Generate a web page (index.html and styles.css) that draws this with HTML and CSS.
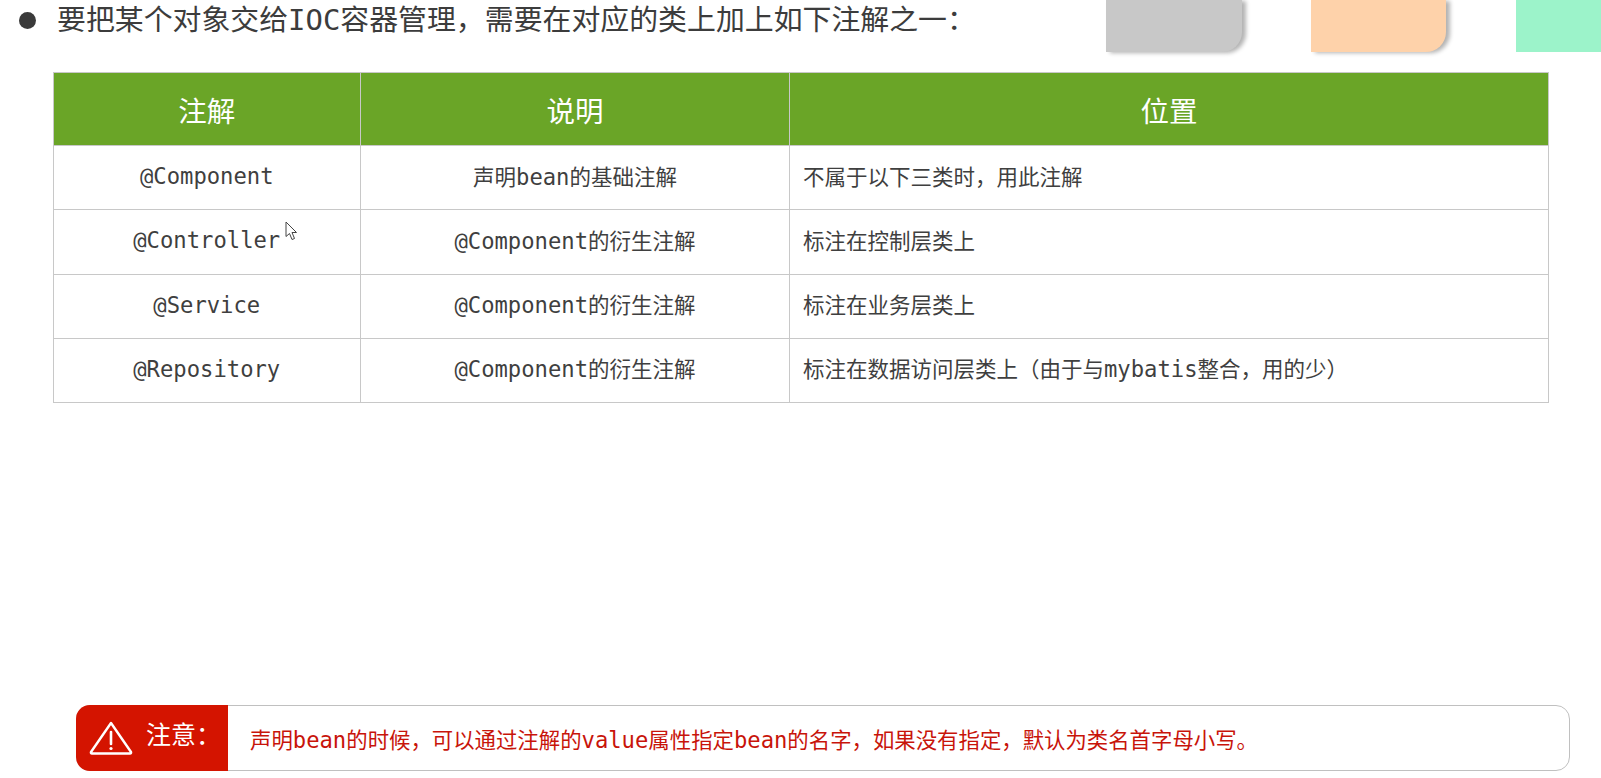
FILE: index.html
```html
<!DOCTYPE html>
<html lang="zh-CN">
<head>
<meta charset="utf-8">
<title>IOC 注解</title>
<link rel="stylesheet" href="styles.css">
</head>
<body>
<div class="page">
  <header class="top">
    <div class="heading">
      <span class="bullet"></span>
      <h1 class="heading-text">要把某个对象交给IOC容器管理，需要在对应的类上加上如下注解之一：</h1>
    </div>
    <div class="tabs">
      <span class="tab tab-gray"></span>
      <span class="tab tab-peach"></span>
      <span class="tab tab-mint"></span>
    </div>
  </header>
  <table class="grid">
    <colgroup><col class="c1"><col class="c2"><col class="c3"></colgroup>
    <thead>
      <tr><th>注解</th><th>说明</th><th>位置</th></tr>
    </thead>
    <tbody>
      <tr><td class="mid code"><span class="en">@Component</span></td><td class="mid">声明<span class="en">bean</span>的基础注解</td><td>不属于以下三类时，用此注解</td></tr>
      <tr><td class="mid code"><span class="en">@Controller</span></td><td class="mid"><span class="en">@Component</span>的衍生注解</td><td>标注在控制层类上</td></tr>
      <tr><td class="mid code"><span class="en">@Service</span></td><td class="mid"><span class="en">@Component</span>的衍生注解</td><td>标注在业务层类上</td></tr>
      <tr><td class="mid code"><span class="en">@Repository</span></td><td class="mid"><span class="en">@Component</span>的衍生注解</td><td>标注在数据访问层类上（由于与<span class="en">mybatis</span>整合，用的少）</td></tr>
    </tbody>
  </table>
  <div class="notice">
    <div class="notice-tag">
      <svg class="warn" viewBox="0 0 44 34" width="44" height="34" aria-hidden="true">
        <path d="M22 2 L42 31 Q42.500 32.500 41 32.500 L3 32.500 Q1.500 32.500 2 31 Z" fill="none" stroke="#fff" stroke-width="2.400" stroke-linejoin="round"/>
        <path d="M22 11 V23" stroke="#fff" stroke-width="2.600" stroke-linecap="round"/>
        <circle cx="22" cy="27.500" r="1.600" fill="#fff"/>
      </svg>
      <span class="notice-label">注意：</span>
    </div>
    <p class="notice-text">声明<span class="en">bean</span>的时候，可以通过注解的<span class="en">value</span>属性指定<span class="en">bean</span>的名字，如果没有指定，默认为类名首字母小写。</p>
  </div>
  <svg class="cursor" viewBox="0 0 14 20" width="14" height="20" aria-hidden="true">
    <path d="M1 1 V15.500 L4.500 12.500 L7 18.500 L9.500 17.500 L7 11.500 L11.500 11.500 Z" fill="#fff" stroke="#444" stroke-width="1"/>
  </svg>
</div>
</body>
</html>
```
FILE: styles.css
```css
* { box-sizing: border-box; }
html, body { margin: 0; padding: 0; background: #fff; }
body {
  width: 1601px;
  height: 778px;
  overflow: hidden;
  font-family: "DejaVu Sans Mono", "Noto Sans CJK SC", monospace;
  color: #3f3f3f;
}
.page { position: relative; width: 1601px; height: 778px; display: flex; flex-direction: column; }
.top { height: 52px; display: flex; justify-content: space-between; align-items: flex-start; }
.heading { display: flex; align-items: center; padding-left: 19px; height: 41px; }
.bullet { width: 17px; height: 17px; border-radius: 50%; background: #3a3a3a; margin-right: 21px; }
.heading-text { margin: 0; font-size: 28.900px; font-weight: 400; line-height: 41px; color: #3c3c3c; white-space: nowrap; }
.tabs { display: flex; }
.tab { display: block; height: 52px; }
.tab-gray { width: 136px; background: #c8c8c8; border-bottom-right-radius: 20px; box-shadow: 4px 1px 4px rgba(0,0,0,.3); margin-right: 69px; }
.tab-peach { width: 135px; background: #fed2aa; border-bottom-right-radius: 20px; box-shadow: 4px 1px 4px rgba(0,0,0,.3); margin-right: 70px; }
.tab-mint { width: 85px; background: #9cf3ca; }
.grid {
  margin: 20px 0 0 52.500px;
  width: 1495.500px;
  border-collapse: collapse;
  table-layout: fixed;
  font-size: 21.500px;
}
.c1 { width: 307.500px; }
.c2 { width: 429px; }
.c3 { width: 759px; }
.grid th, .grid td { border: 1px solid #c8c8c8; padding: 0; }
.grid th { height: 73px; background: #6aa527; color: #fff; font-size: 28.500px; font-weight: 400; text-align: center; }
.grid td { height: 64.250px; padding: 0 0 5px 13px; white-space: nowrap; }
.grid td.mid { padding-left: 0; text-align: center; }
.grid td.code { padding-bottom: 3px; }
.en { font-size: 22.200px; }
.notice {
  margin: 302px 0 0 76px;
  width: 1494px;
  height: 66px;
  display: flex;
  align-items: stretch;
  border: 1px solid #c0c0c0;
  border-radius: 14px;
}
.notice-tag {
  margin: -1px 0 -1px -1px;
  width: 152px;
  background: #d41400;
  border-radius: 14px 0 0 14px;
  display: flex;
  align-items: center;
  color: #fff;
  padding-left: 13px;
}
.warn { flex: none; margin-top: -1px; }
.notice-label { margin-left: 13px; margin-top: -11px; font-size: 25px; white-space: nowrap; }
.notice-text { margin: 0 0 0 22px; align-self: center; font-size: 21.400px; color: #c8140a; white-space: nowrap; }
.cursor { position: absolute; left: 285px; top: 221px; }
```
